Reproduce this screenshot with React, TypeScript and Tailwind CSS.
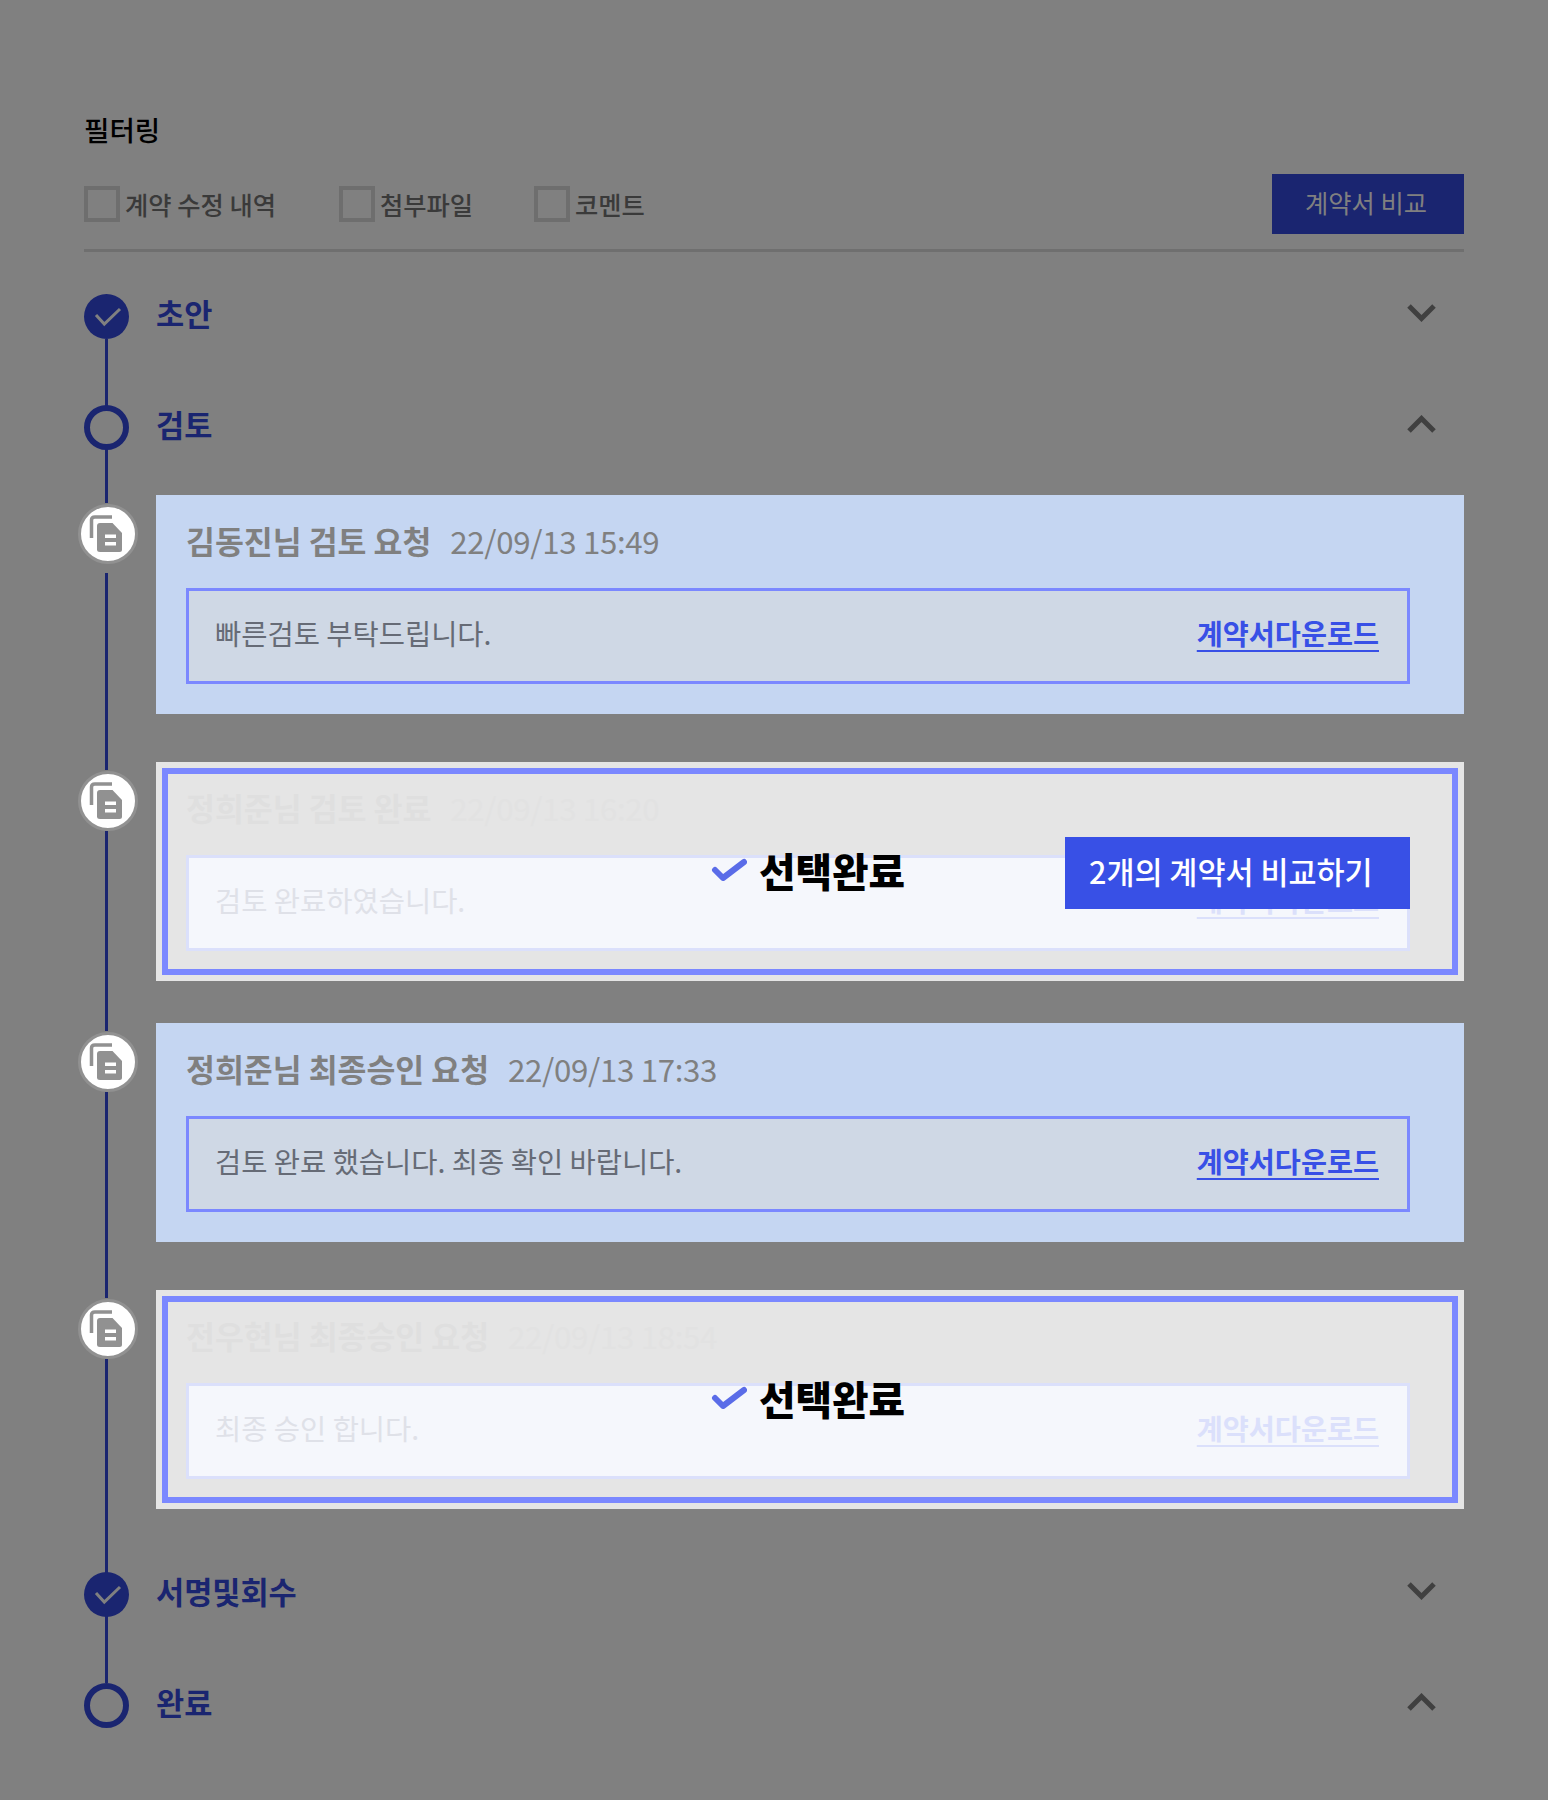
import React from "react";

const font = { fontFamily: '"Noto Sans CJK KR", "Noto Sans", sans-serif' };

function DoneDot() {
  return (
    <svg width="45" height="45" viewBox="0 0 45 45" className="relative shrink-0">
      <circle cx="22.5" cy="22.5" r="22.5" fill="#1a2570" />
      <polyline points="12,21 20.3,30 36,15" fill="none" stroke="#808080" strokeWidth="3" />
    </svg>
  );
}

function OpenDot() {
  return (
    <div className="relative h-[45px] w-[45px] shrink-0 rounded-full border-[6px] border-[#1a2570] bg-[#808080]" />
  );
}

function Chevron({ up }: { up?: boolean }) {
  return (
    <svg width="29" height="18" viewBox="0 0 29 18" className="mr-[28px] shrink-0">
      <polyline
        points={up ? "2,16 14.5,3.5 27,16" : "2,2 14.5,14.5 27,2"}
        fill="none"
        stroke="#404040"
        strokeWidth="5"
      />
    </svg>
  );
}

function Stage({ title, done, up }: { title: string; done?: boolean; up?: boolean }) {
  return (
    <div className="flex h-[45px] items-center">
      {done ? <DoneDot /> : <OpenDot />}
      <div className="ml-[27px] flex-1 -translate-y-[4px] text-[30.6px] font-bold leading-[40px] text-[#1a2570]">{title}</div>
      <div className="-translate-y-[4px]">
        <Chevron up={up} />
      </div>
    </div>
  );
}

function DocIcon({ tall }: { tall?: boolean }) {
  return (
    <div className={`relative flex w-[72px] shrink-0 items-start justify-center bg-[#808080] pt-[1px] ${tall ? "h-[70px]" : "h-[61px]"}`}>
      <div className="h-[60px] w-[60px] rounded-full border-[3px] border-[#919191] bg-white">
        <svg width="54" height="54" viewBox="3 3 54 54" className="block">
          <path d="M13.5 34V16Q13.5 13 17 13H34" fill="none" stroke="#919191" strokeWidth="3.5" />
          <path
            d="M22 19H34.5L44 29V45.5Q44 48 41.5 48H22Q19 48 19 45.5V22Q19 19 22 19Z"
            fill="#919191"
          />
          <rect x="27" y="30.5" width="11" height="3.5" fill="#ffffff" />
          <rect x="27" y="38" width="11" height="3.5" fill="#ffffff" />
        </svg>
      </div>
    </div>
  );
}

type CardProps = {
  title: string;
  date: string;
  body: string;
  selected?: boolean;
  compare?: boolean;
  tallIcon?: boolean;
  className?: string;
};

function Card({ title, date, body, selected, compare, tallIcon, className }: CardProps) {
  return (
    <div className={`flex items-start ${className ?? ""}`}>
      <div className="ml-[-12px] mt-[8px] flex w-[84px] shrink-0 justify-start">
        <DocIcon tall={tallIcon} />
      </div>
      <div className={`relative h-[219px] flex-1 ${selected ? "bg-[#e5e5e5]" : "bg-[#c5d6f2]"}`}>
        <div className="flex h-[93px] -translate-y-[1px] items-center pl-[30px]">
          <span className={`text-[31.4px] font-bold leading-[40px] ${selected ? "text-[#dfdfdf]" : "text-[#808080]"}`}>{title}</span>
          <span className={`ml-[19px] text-[31.2px] leading-[40px] tracking-[-0.3px] ${selected ? "text-[#e2e2e2]" : "text-[#808080]"}`}>{date}</span>
        </div>
        <div
          className={`ml-[30px] mr-[54px] flex h-[96px] items-center justify-between border-[3px] pb-[7px] pl-[26px] pr-[28px] ${
            selected ? "border-[#dbe0fb] bg-[#f5f7fc]" : "border-[#7b88ff] bg-[#cfd8e5]"
          }`}
        >
          <span className={`text-[28.5px] leading-[40px] ${selected ? "text-[#dfe1e8]" : "text-[#666b76]"}`}>{body}</span>
          <span className={`text-[28.3px] font-bold leading-[40px] underline decoration-2 underline-offset-[5px] ${selected ? "text-[#dbe0fb]" : "text-[#3850e6]"}`}>
            계약서다운로드
          </span>
        </div>
        {selected && (
          <>
            <div className="absolute inset-[6px] border-[6px] border-[#7b88ff]" />
            <div className="absolute inset-0 flex items-center justify-center pb-[4px] pr-[4px]">
              <svg width="36" height="28" viewBox="0 0 36 28" className="mr-[12px] translate-y-[2px]">
                <polyline
                  points="4,12 12,20 33,4"
                  fill="none"
                  stroke="#5a6ce8"
                  strokeWidth="6"
                  strokeLinecap="round"
                  strokeLinejoin="round"
                />
              </svg>
              <span className="text-[39.7px] font-black leading-[48px] text-black">선택완료</span>
            </div>
            {compare && (
              <div className="absolute right-[54px] top-[75px] flex h-[72px] w-[345px] items-center bg-[#3850e6] pb-[2px] pl-[24px] text-[30.5px] font-medium text-white">
                2개의 계약서 비교하기
              </div>
            )}
          </>
        )}
      </div>
    </div>
  );
}

function Check({ label, className }: { label: string; className?: string }) {
  return (
    <label className={`flex items-center ${className ?? ""}`}>
      <span className="h-[36px] w-[36px] border-4 border-[#6e6e6e]" />
      <span className="ml-[5px] text-[25.3px] font-medium leading-[36px] text-[#3a3a3a]">{label}</span>
    </label>
  );
}

export default function App() {
  return (
    <div className="min-h-[1800px] bg-[#808080] px-[84px] pt-[109px]" style={font}>
      <h2 className="text-[27.6px] font-medium leading-[40px] text-black">필터링</h2>
      <div className="mt-[25px] flex h-[78px] items-start border-b-[3px] border-[#6f6f6f]">
        <div className="mt-[12px] flex">
          <Check label="계약 수정 내역" className="w-[255px]" />
          <Check label="첨부파일" className="w-[195px]" />
          <Check label="코멘트" />
        </div>
        <button className="ml-auto h-[60px] w-[192px] bg-[#1a2570] pb-[2px] pr-[4px] text-[25.3px] text-[#808080]">계약서 비교</button>
      </div>

      <div className="relative mt-[42px]">
        <div className="absolute bottom-[45px] left-[21px] top-[45px] w-[3px] bg-[#1a2570]" />
        <Stage title="초안" done />
        <div className="mt-[66px]">
          <Stage title="검토" up />
        </div>
        <Card className="mt-[45px]" tallIcon title="김동진님 검토 요청" date="22/09/13 15:49" body="빠른검토 부탁드립니다." />
        <Card className="mt-[48px]" title="정희준님 검토 완료" date="22/09/13 16:20" body="검토 완료하였습니다." selected compare />
        <Card className="mt-[42px]" title="정희준님 최종승인 요청" date="22/09/13 17:33" body="검토 완료 했습니다. 최종 확인 바랍니다." />
        <Card className="mt-[48px]" title="전우현님 최종승인 요청" date="22/09/13 18:54" body="최종 승인 합니다." selected />
        <div className="mt-[63px]">
          <Stage title="서명및회수" done />
        </div>
        <div className="mt-[66px]">
          <Stage title="완료" up />
        </div>
      </div>
    </div>
  );
}
